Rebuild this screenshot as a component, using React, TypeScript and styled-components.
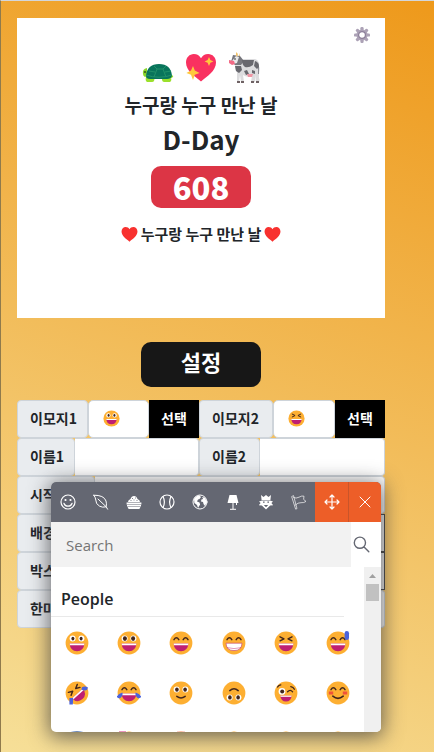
import React from "react";
import styled, { createGlobalStyle } from "styled-components";

const GlobalStyle = createGlobalStyle`
  *, *::before, *::after { box-sizing: border-box; }
  body {
    margin: 0;
    color: #212529;
    font-family: "Noto Sans CJK KR", "Noto Sans", sans-serif;
    font-size: 14px;
    font-weight: 700;
  }
  button, input { font: inherit; }
`;

const Page = styled.main`
  min-height: 100vh;
  padding: 17px 49px 124px 16px;
  border-top: 1px solid #d3d6da;
  border-left: 1px solid #8f7a4c;
  background: linear-gradient(200deg, #ee991b 0%, #f6df98 100%);
`;

const Card = styled.section`
  position: relative;
  display: flex;
  flex-direction: column;
  align-items: center;
  min-height: 300px;
  padding-top: 34px;
  background: #fff;
`;

const GearButton = styled.button`
  position: absolute;
  top: 9px;
  right: 15px;
  display: flex;
  padding: 0;
  border: 0;
  background: none;
`;

const Couple = styled.div`
  display: flex;
  gap: 11px;
`;

const Names = styled.p`
  margin: 7px 0 0;
  font-size: 19px;
  line-height: 28px;
`;

const DDay = styled.h1`
  margin: 2px 0 0;
  font-size: 26px;
  line-height: 36px;
`;

const Count = styled.strong`
  min-width: 100px;
  margin-top: 9px;
  border-radius: 10px;
  background: #dc3545;
  color: #fff;
  font-size: 31px;
  line-height: 42px;
  text-align: center;
`;

const Message = styled.p`
  display: flex;
  align-items: center;
  gap: 3px;
  margin: 14px 0 0;
  font-size: 15px;
  line-height: 24px;
`;

const SettingsButton = styled.button`
  display: block;
  width: 120px;
  height: 45px;
  margin: 24px auto 13px;
  padding: 0 0 8px;
  border: 0;
  border-radius: 10px;
  background: #171717;
  color: #fff;
  font-size: 22px;
`;

const Settings = styled.form`
  position: relative;
`;

const Row = styled.div<{ $split?: boolean }>`
  display: grid;
  grid-template-columns: ${(p) => (p.$split ? "182fr 186fr" : "1fr")};
`;

const Group = styled.div`
  display: flex;
  min-width: 0;
  height: 38px;
`;

const Label = styled.label<{ $width: number }>`
  flex: 0 0 ${(p) => p.$width}px;
  padding: 0 0 0 12px;
  overflow: hidden;
  border: 1px solid #ced4da;
  border-radius: 4px;
  background: #e9ecef;
  line-height: 34px;
  white-space: nowrap;
`;

const TextInput = styled.input`
  flex: 1;
  min-width: 0;
  padding: 6px 12px;
  border: 1px solid #ced4da;
  border-left: 0;
  border-radius: 0 4px 4px 0;
  background: #fff;
`;

const ColorInput = styled.input`
  flex: 1;
  min-width: 0;
  height: 38px;
  padding: 1px 2px;
  border: 1px solid #444;
  background: #efefef;
`;

const EmojiField = styled.div`
  display: flex;
  flex: 1;
  align-items: center;
  min-width: 0;
  padding: 0 2px 2px 14px;
  border: 1px solid #ced4da;
  border-radius: 5px;
  background: #fff;
`;

const EmojiInput = styled.input`
  flex: 1;
  width: 0;
  min-width: 0;
  padding: 0;
  border: 0;
  outline: 0;
  background: transparent;
`;

const PickButton = styled.button`
  flex: 0 0 50px;
  padding: 0 0 3px;
  border: 0;
  background: #000;
  color: #fff;
`;

const Picker = styled.section`
  position: absolute;
  top: 82px;
  left: 34px;
  display: flex;
  flex-direction: column;
  width: 330px;
  height: 250px;
  overflow: hidden;
  border-radius: 5px;
  background: #fff;
  font-family: "Open Sans", "Noto Sans", sans-serif;
  box-shadow: 0 3px 20px 2px rgba(62, 62, 64, 0.75);
`;

const Tabs = styled.nav`
  display: grid;
  grid-template-columns: repeat(10, 1fr);
  height: 40px;
  background: #646772;
`;

const Tab = styled.button<{ $accent?: boolean; $divided?: boolean }>`
  display: flex;
  align-items: center;
  justify-content: center;
  padding: 0;
  border: 0;
  border-left: ${(p) => (p.$divided ? "1px solid #c9552a" : "0")};
  background: ${(p) => (p.$accent ? "#ed5e28" : "transparent")};
  color: #fff;
`;

const SearchBar = styled.div`
  display: flex;
  height: 45px;
`;

const SearchInput = styled.input`
  flex: 1;
  min-width: 0;
  padding: 0 15px 0 15px;
  border: 0;
  background: #f2f2f2;
  font-size: 15px;
  font-weight: 400;
  &::placeholder { color: #757575; opacity: 1; }
`;

const SearchButton = styled.button`
  flex: 0 0 30px;
  display: flex;
  align-items: center;
  padding: 0 0 0 2px;
  border: 0;
  background: #fff;
  color: #646772;
`;

const PickerBody = styled.div`
  display: flex;
  flex: 1;
  min-height: 0;
`;

const EmojiList = styled.div`
  flex: 1;
  min-width: 0;
  overflow: hidden;
`;

const Category = styled.h2`
  height: 50px;
  margin: 0 20px 0 0;
  padding: 20px 0 0 10px;
  border-bottom: 1px solid #e9e9e9;
  font-size: 16px;
  font-weight: 600;
  line-height: 24px;
`;

const EmojiGrid = styled.div`
  display: grid;
  grid-template-columns: repeat(6, 1fr);
  grid-auto-rows: 50px;
  padding-top: 1px;
`;

const EmojiButton = styled.button`
  display: flex;
  align-items: center;
  justify-content: center;
  padding: 0;
  border: 0;
  background: none;
`;

const ScrollTrack = styled.div`
  display: flex;
  flex: 0 0 17px;
  flex-direction: column;
  align-items: center;
  background: #f0f0f0;
`;

const ScrollThumb = styled.div`
  width: 13px;
  height: 17px;
  background: #c1c1c1;
`;

type Kind =
  | "grin" | "smiley" | "smile" | "beam" | "squint" | "sweat"
  | "rofl" | "joy" | "slight" | "flipped" | "zany" | "blush"
  | "halo" | "hearts" | "heartEyes" | "star" | "kiss" | "kissing";

const INK = "#42261c";

const OpenEyes = ({ r = 1.5 }: { r?: number }) => (
  <g>
    <circle cx="7.6" cy="7.6" r="3" fill="#fff" />
    <circle cx="16.4" cy="7.6" r="3" fill="#fff" />
    <ellipse cx="7.9" cy="7.6" rx={r} ry={r + 0.4} fill={INK} />
    <ellipse cx="16.1" cy="7.6" rx={r} ry={r + 0.4} fill={INK} />
  </g>
);

const ArcEyes = () => (
  <path d="M5 8.6q2.4-3.6 4.8 0M14.2 8.6q2.4-3.6 4.8 0" fill="none" stroke={INK} strokeWidth="1.5" strokeLinecap="round" />
);

const Mouth = () => (
  <g>
    <path d="M4.6 12.6h14.8q-.6 7.6-7.4 7.6t-7.4-7.6z" fill="#bf1f72" />
    <path d="M4.6 12.6h14.8l-.3 1.6H4.9z" fill="#fff" />
  </g>
);

const SquintEyes = () => (
  <path d="M6 5.8l4 2-4 2M18 5.8l-4 2 4 2" fill="none" stroke={INK} strokeWidth="1.4" strokeLinecap="round" strokeLinejoin="round" />
);

const faces: Record<Kind, React.ReactNode> = {
  grin: <><OpenEyes /><Mouth /></>,
  smiley: <><OpenEyes r={2} /><Mouth /></>,
  smile: <><ArcEyes /><Mouth /></>,
  beam: (
    <>
      <ArcEyes />
      <path d="M4 12.2h16q-.3 7.4-8 7.4t-8-7.4z" fill="#fff" stroke="#c0357a" strokeWidth=".6" />
      <path d="M5 16.600q7 2 14 0" fill="none" stroke="#c0357a" strokeWidth=".5" />
    </>
  ),
  squint: <><SquintEyes /><Mouth /></>,
  sweat: <><ArcEyes /><Mouth /><rect x="18.6" y="0" width="4.4" height="9" rx="2.2" fill="#4b63dc" /></>,
  rofl: (
    <g>
      <g transform="rotate(-42 12 12)"><SquintEyes /><Mouth /></g>
      <path d="M17 6.2q3-1.6 6 .2l-1 2.6q-3 1-5.600-.6zM4.4 17h3.8l-.4 6.6H4.4z" fill="#4b63dc" />
    </g>
  ),
  joy: (
    <>
      <ArcEyes /><Mouth />
      <path d="M5.4 11.6q.8 3.8-2 5.4-2.6.8-3.6-1.4 1.6-2.6 5.6-4zM18.6 11.6q-.8 3.8 2 5.4 2.6.8 3.6-1.4-1.6-2.6-5.6-4z" fill="#4b63dc" />
    </>
  ),
  slight: (
    <><g transform="translate(0 1)"><OpenEyes r={1.8} /></g><path d="M7.8 15.4q4.2 3 8.4 0" fill="none" stroke={INK} strokeWidth="1.5" strokeLinecap="round" /></>
  ),
  flipped: (
    <g transform="rotate(180 12 12)"><OpenEyes r={1.8} /><path d="M7.8 14.4q4.2 3.6 8.4 0" fill="none" stroke={INK} strokeWidth="1.5" strokeLinecap="round" /></g>
  ),
  zany: (
    <>
      <circle cx="8" cy="10.4" r="3.4" fill="#fff" /><circle cx="8.2" cy="10.4" r="2" fill={INK} />
      <path d="M3.6 6q1-2 3.2-2.2M13.6 10.8q2.6-3 5 0M16.8 5.6q2.6.4 3.6 2.6" fill="none" stroke={INK} strokeWidth="1.3" strokeLinecap="round" />
      <path d="M6.4 14.8h11.2q-.4 5.8-5.6 5.8t-5.6-5.8z" fill="#bf1f72" />
      <path d="M6.4 14.6h11.2l-.2 1.4H6.6z" fill="#f4dbe0" />
    </>
  ),
  blush: (
    <>
      <ArcEyes />
      <path d="M2.8 10.4h4.4v3H2.8zM16.8 10.4h4.4v3h-4.4z" fill="#f0523a" />
      <path d="M6.8 15.2q5.2 4.4 10.4 0" fill="none" stroke={INK} strokeWidth="1.6" strokeLinecap="round" />
    </>
  ),
  halo: <><ellipse cx="12" cy="2.6" rx="9" ry="2.4" fill="#3e6fc0" /><ArcEyes /></>,
  hearts: <><path d="M2 .4h7v4H2z" fill="#d82a7c" /><ArcEyes /></>,
  heartEyes: <><path d="M8 .4h8v1H8z" fill="#f5a3a0" /><ArcEyes /></>,
  star: <><OpenEyes /><Mouth /></>,
  kiss: <ArcEyes />,
  kissing: <ArcEyes />,
};

const Emoji = ({ kind, size = 24 }: { kind: Kind; size?: number }) => (
  <svg width={size} height={size} viewBox="0 0 24 24" aria-hidden="true">
    <circle cx="12" cy="12" r="11.4" fill="#fdaf32" />
    {faces[kind]}
  </svg>
);

const emojis: [Kind, string][] = [
  ["grin", "Grinning face"], ["smiley", "Smiling face, big eyes"], ["smile", "Smiling eyes"],
  ["beam", "Beaming face"], ["squint", "Squinting face"], ["sweat", "Grinning with sweat"],
  ["rofl", "Rolling on the floor"], ["joy", "Tears of joy"], ["slight", "Slight smile"],
  ["flipped", "Upside-down face"], ["zany", "Winking face"], ["blush", "Blushing face"],
  ["halo", "Halo"], ["hearts", "Smiling with hearts"], ["heartEyes", "Heart eyes"],
  ["star", "Star-struck"], ["kiss", "Blowing a kiss"], ["kissing", "Kissing"],
];

const Turtle = () => (
  <svg width="32" height="32" viewBox="0 0 32 32" role="img" aria-label="거북이">
    <path d="M1 22q-1-5 4-6v8l-2 1q-2-1-2-3z" fill="#8bd52b" />
    <path d="M28 23q4 0 3 2-2 2-6 1zM4 25h9l-1 4q-.5 1-2 1H5q-2-1-1-5zM20 25h9q1 4-1 5h-6q-1.500 0-2-2z" fill="#9be02c" />
    <path d="M4 24Q5 12 17 12t13 12q-1 3-5 3H8q-4 0-4-3z" fill="#08745b" />
    <path d="M4 23q13 4.500 26 0M12 14l3 3h6l3-3M15 17l-3 8M21 17l3 8M7 19l6 1M29 19l-6 1" fill="none" stroke="#219069" strokeWidth="1" />
    <circle cx="3" cy="20" r="1" fill="#36511c" />
  </svg>
);

const HEART = "M16 29.500C10 24.500 1 19 1 10.500 1 5.500 4.500 2 8.800 2 12 2 14.500 3.600 16 6.200 17.500 3.600 20 2 23.200 2 27.500 2 31 5.500 31 10.500 31 19 22 24.500 16 29.500z";

const SparkHeart = () => (
  <svg width="32" height="32" viewBox="0 0 32 32" role="img" aria-label="하트">
    <path d={HEART} fill="#f93160" />
    <path d="M24 5l1.400 3 3 1.400-3 1.400-1.400 3.200-1.400-3.200-3-1.400 3-1.400zM8 14l1.800 4.600L14.600 21l-4.800 1.800L8 28l-2-5.200L1.400 21 6 18.600z" fill="#ffc83d" />
  </svg>
);

const Cow = () => (
  <svg width="32" height="32" viewBox="0 0 32 32" role="img" aria-label="소">
    <path d="M12 7h15q4 1 4 6v13q1 2 0 4h-3v-7l-1 7h-4l1-6q-5 2-9-1l1 7h-3l-1-7-1 7H9V20q-2-2-2-6V5z" fill="#dcdcde" />
    <path d="M30 10q2 6 1 12h-1z" fill="#898a92" />
    <path d="M5 3l7 1 4 5-3 4H7L3 10z" fill="#77777d" />
    <path d="M7 14h6l1 4-3 3-3-2zM14 8h12l-1 5q-4 3-8 2-3-2-3-7zM27 9q4 1 4 6l-2 2-3-3zM16 19l3-1 2 4-3 1zM24 18l3 1v3l-3-1z" fill="#68686e" />
    <path d="M8 4l3 1-2 6-4 1-1-3z" fill="#e9e9eb" />
    <path d="M1 8l5 1 1 3-3 1-3-2z" fill="#f26b86" />
    <path d="M8 0l2 2-1 3-1-2zM12 1v3h-1z" fill="#f4c46a" />
    <path d="M19 22h6l-1 3h-4z" fill="#ef95a4" />
    <circle cx="7" cy="7" r=".8" fill="#222" />
    <path d="M9 29h3v2H9zM13 29h3v2h-3zM23 29h3v2h-3zM28 29h3v2h-3z" fill="#6f6264" />
  </svg>
);

const SmallHeart = () => (
  <svg width="17" height="17" viewBox="0 0 32 32" aria-hidden="true"><path d={HEART} fill="#f8312f" /></svg>
);

const Gear = () => (
  <svg width="16" height="16" viewBox="0 0 16 16" aria-hidden="true">
    {[0, 45, 90, 135].map((a) => (
      <rect key={a} x="6.400" y="0" width="3.200" height="16" rx="1.200" fill="#aca2b6" transform={`rotate(${a} 8 8)`} />
    ))}
    <circle cx="8" cy="8" r="5.600" fill="#aca2b6" />
    <circle cx="8" cy="8" r="3.400" fill="#fff" stroke="#8b7d98" strokeWidth="1.200" />
  </svg>
);

const line = { fill: "none", stroke: "currentColor", strokeWidth: 1, strokeLinecap: "round", strokeLinejoin: "round" } as const;

const tabs: { name: string; accent?: boolean; divided?: boolean; art: React.ReactNode }[] = [
  {
    name: "People",
    art: <><circle cx="8" cy="8" r="7" {...line} strokeWidth="1.200" /><circle cx="5.500" cy="6" r="1.100" fill="currentColor" /><circle cx="10.500" cy="6" r="1.100" fill="currentColor" /><path d="M4 9.400q1.200 2.800 4 2.800t4-2.800" {...line} strokeWidth="1.300" /></>,
  },
  {
    name: "Nature",
    art: <path d="M.8 1.200Q11 1 13 7q.8 2.600.2 5.800-3.800 1-6.600-.6Q2.600 10 2.800 6 2.400 3 .8 1.200zM5 5l8.200 7.800 1.400 2.400" {...line} />,
  },
  {
    name: "Food",
    art: <><path d="M2 8q0-2 2.500-3Q5.500 2 8 2t3.500 3Q14 6 14 8z" fill="currentColor" /><path d="M.6 8.600h14.800v2H.6zM1 11h14v1.600H1zM1.600 13h12.800l-1 2H2.600z" fill="currentColor" /><path d="M6 4.500h1M9 4h1M7.500 6h1M4.500 6.500h1M10.500 6.500h1" stroke="#646772" strokeWidth=".8" /></>,
  },
  {
    name: "Activity",
    art: <><circle cx="8" cy="8" r="7" {...line} strokeWidth="1.200" /><path d="M4 2.500q2.800 5.500 0 11M12 2.500q-2.800 5.500 0 11" {...line} strokeWidth="1.200" /></>,
  },
  {
    name: "Travel",
    art: <><circle cx="8" cy="8" r="7" {...line} /><path d="M2 5q2-3.500 5.500-3.600L9 3 7.500 5 6 5.500 5 7.500l2.500 1 .6 2L6 14l-1-3-2.600-2zM10 3l3 .8L15 8l-2 4-1.500-2L11 8 9 7.500l.4-2 1.800-.6z" fill="currentColor" /></>,
  },
  {
    name: "Objects",
    art: <><path d="M4.500 1h7L13.500 9h-11z" fill="currentColor" /><path d="M8 9v6M5 15.300h6M11.500 9v2" stroke="currentColor" strokeWidth="1" fill="none" /></>,
  },
  {
    name: "Symbols",
    art: <path fillRule="evenodd" d="M3 1l2.500 2L8 1l2.500 2L13 1l-.6 5H3.600zM1 7.400l3-.8h8l3 .8-1.600 1.600 1.800 2.200-3 .2L8 15.400l-4.200-4-3-.2L2.600 9zM5 7.600v1.200h1.600V7.600zM9.400 7.600v1.200H11V7.600zM5.800 11L8 13.200 10.200 11z" fill="currentColor" />,
  },
  {
    name: "Flags",
    art: <path d="M1 2.400l1.500-.8 3.500 13-1 .4zM2.500 3.400Q5 5 8 3.200t5-1l-.4 3.200 2.400 2q-2 1.600-5 1.300T4.400 11" {...line} strokeWidth=".8" opacity=".85" />,
  },
  {
    name: "Move",
    accent: true,
    art: <path d="M8 1v14M1 8h14M6 3l2-2 2 2M6 13l2 2 2-2M3 6L1 8l2 2M13 6l2 2-2 2" {...line} strokeWidth="1.200" />,
  },
  { name: "Close", accent: true, divided: true, art: <path d="M3 3l10 10M13 3L3 13" {...line} /> },
];

function EmojiPicker() {
  return (
    <Picker aria-label="Emoji picker">
      <Tabs>
        {tabs.map((t) => (
          <Tab key={t.name} type="button" aria-label={t.name} $accent={t.accent} $divided={t.divided}>
            <svg width="16" height="16" viewBox="0 0 16 16" aria-hidden="true">{t.art}</svg>
          </Tab>
        ))}
      </Tabs>
      <SearchBar>
        <SearchInput type="text" placeholder="Search" aria-label="Search" />
        <SearchButton type="button" aria-label="Search emoji">
          <svg width="17" height="17" viewBox="0 0 17 17" aria-hidden="true">
            <path d="M12.500 6.700a5.600 5.600 0 1 1-11.200 0 5.600 5.600 0 0 1 11.200 0zM10.800 10.800l5 5" {...line} strokeWidth="1.400" />
          </svg>
        </SearchButton>
      </SearchBar>
      <PickerBody>
        <EmojiList>
          <Category>People</Category>
          <EmojiGrid>
            {emojis.map(([kind, name]) => (
              <EmojiButton key={kind} type="button" aria-label={name}><Emoji kind={kind} /></EmojiButton>
            ))}
          </EmojiGrid>
        </EmojiList>
        <ScrollTrack>
          <svg width="17" height="17" viewBox="0 0 17 17" aria-hidden="true"><path d="M5 11l3.500-4 3.500 4z" fill="#a0a0a0" /></svg>
          <ScrollThumb />
        </ScrollTrack>
      </PickerBody>
    </Picker>
  );
}

function EmojiGroup({ id, label, width, kind }: { id: string; label: string; width: number; kind: Kind }) {
  return (
    <Group>
      <Label htmlFor={id} $width={width}>{label}</Label>
      <EmojiField>
        <Emoji kind={kind} size={17} />
        <EmojiInput id={id} type="text" />
      </EmojiField>
      <PickButton type="button">선택</PickButton>
    </Group>
  );
}

function TextGroup({ id, label, width }: { id: string; label: string; width: number }) {
  return (
    <Group>
      <Label htmlFor={id} $width={width}>{label}</Label>
      <TextInput id={id} type="text" />
    </Group>
  );
}

function ColorGroup({ id, label, width }: { id: string; label: string; width: number }) {
  return (
    <Group>
      <Label htmlFor={id} $width={width}>{label}</Label>
      <ColorInput id={id} type="color" defaultValue="#ffffff" />
    </Group>
  );
}

export default function App() {
  return (
    <>
      <GlobalStyle />
      <Page>
        <Card>
          <GearButton type="button" aria-label="설정 열기"><Gear /></GearButton>
          <Couple><Turtle /><SparkHeart /><Cow /></Couple>
          <Names>누구랑 누구 만난 날</Names>
          <DDay>D-Day</DDay>
          <Count>608</Count>
          <Message><SmallHeart />누구랑 누구 만난 날<SmallHeart /></Message>
        </Card>
        <SettingsButton type="button">설정</SettingsButton>
        <Settings>
          <Row $split>
            <EmojiGroup id="emoji1" label="이모지1" width={71} kind="grin" />
            <EmojiGroup id="emoji2" label="이모지2" width={74} kind="squint" />
          </Row>
          <Row $split>
            <TextGroup id="name1" label="이름1" width={58} />
            <TextGroup id="name2" label="이름2" width={61} />
          </Row>
          <Row><TextGroup id="start" label="시작날짜" width={78} /></Row>
          <Row><ColorGroup id="background" label="배경색" width={71} /></Row>
          <Row><ColorGroup id="box" label="박스색" width={71} /></Row>
          <Row><TextGroup id="note" label="한마디" width={71} /></Row>
          <EmojiPicker />
        </Settings>
      </Page>
    </>
  );
}
